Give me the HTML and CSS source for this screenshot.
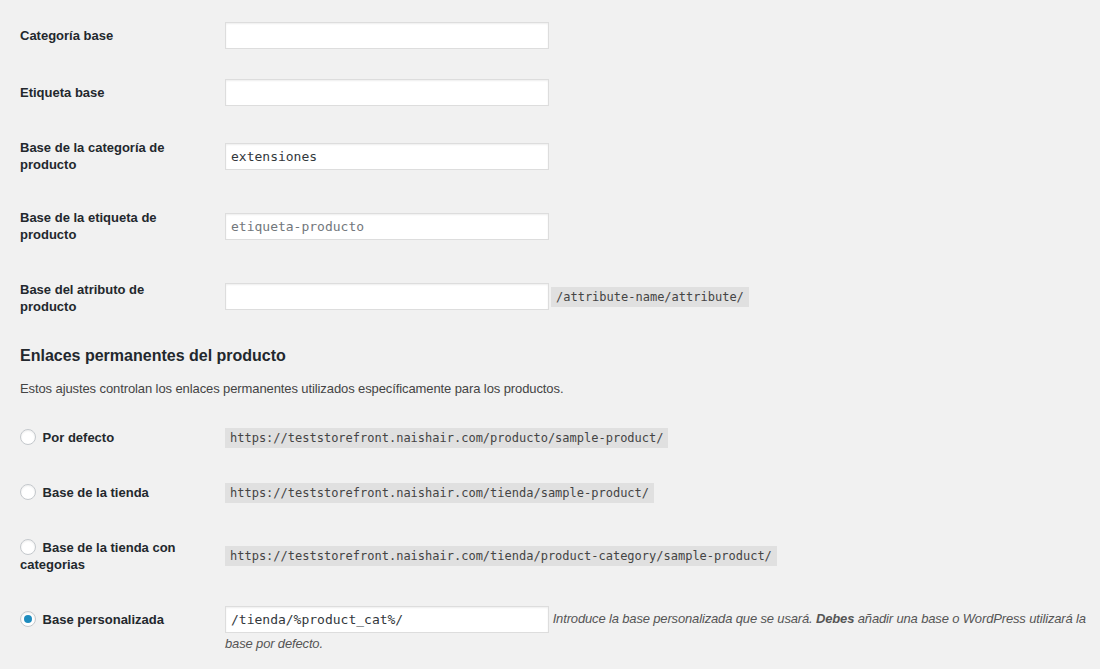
FILE: index.html
```html
<!DOCTYPE html>
<html lang="es">
  <head>
    <meta charset="UTF-8" />
    <meta name="viewport" content="width=device-width, initial-scale=1.0" />
    <title>Enlaces permanentes</title>
    <link rel="stylesheet" href="styles.css">
  </head>
  <body>
    <div class="wrap">
      <!-- Bases opcionales -->
      <div class="form-table">
        <div class="form-row">
          <label class="row-label" for="category_base">Categoría base</label>
          <div class="row-field">
            <input id="category_base" class="regular-text code" type="text" value="">
          </div>
        </div>
        <div class="form-row">
          <label class="row-label" for="tag_base">Etiqueta base</label>
          <div class="row-field">
            <input id="tag_base" class="regular-text code" type="text" value="">
          </div>
        </div>
        <div class="form-row">
          <label class="row-label" for="product_category_slug">Base de la categoría de producto</label>
          <div class="row-field">
            <input id="product_category_slug" class="regular-text code" type="text" value="extensiones">
          </div>
        </div>
        <div class="form-row">
          <label class="row-label" for="product_tag_slug">Base de la etiqueta de producto</label>
          <div class="row-field">
            <input id="product_tag_slug" class="regular-text code" type="text" value="" placeholder="etiqueta-producto">
          </div>
        </div>
        <div class="form-row attr-row">
          <label class="row-label" for="product_attribute_slug">Base del atributo de producto</label>
          <div class="row-field inline-field">
            <input id="product_attribute_slug" class="regular-text code" type="text" value="">
            <code>/attribute-name/attribute/</code>
          </div>
        </div>
      </div>

      <h2 class="section-title">Enlaces permanentes del producto</h2>
      <p class="section-desc">Estos ajustes controlan los enlaces permanentes utilizados específicamente para los productos.</p>

      <!-- Estructura de enlaces de producto -->
      <div class="form-table permalink-table">
        <div class="form-row">
          <label class="row-label"><input name="product_permalink" type="radio"> Por defecto</label>
          <div class="row-field"><code>https://teststorefront.naishair.com/producto/sample-product/</code></div>
        </div>
        <div class="form-row">
          <label class="row-label"><input name="product_permalink" type="radio"> Base de la tienda</label>
          <div class="row-field"><code>https://teststorefront.naishair.com/tienda/sample-product/</code></div>
        </div>
        <div class="form-row">
          <label class="row-label"><input name="product_permalink" type="radio"> Base de la tienda con categorias</label>
          <div class="row-field"><code>https://teststorefront.naishair.com/tienda/product-category/sample-product/</code></div>
        </div>
        <div class="form-row custom-row">
          <label class="row-label"><input name="product_permalink" type="radio" checked> Base personalizada</label>
          <div class="row-field">
            <input class="regular-text code" type="text" value="/tienda/%product_cat%/">
            <span class="description">Introduce la base personalizada que se usará. <strong>Debes</strong> añadir una base o WordPress utilizará la base por defecto.</span>
          </div>
        </div>
      </div>
    </div>
  </body>
</html>
```

FILE: styles.css
```css
body {
  margin: 0;
  background-color: #f1f1f1;
  color: #444;
  font-family: "Liberation Sans", Arial, sans-serif;
  font-size: 13px;
  line-height: 1.4;
}
.wrap {
  padding: 7px 0 0 20px;
}

/* Tabla de ajustes */
.form-row {
  display: grid;
  grid-template-columns: 205px 1fr;
  align-items: center;
}
.row-label {
  padding: 18px 28px 18px 0;
  color: #23282d;
  font-weight: 600;
  line-height: 17px;
}
.row-field {
  padding: 15px 0;
}
.attr-row .row-label {
  padding-top: 20px;
  padding-bottom: 17px;
}
.inline-field {
  display: flex;
  align-items: center;
  gap: 2px;
}

input.regular-text {
  box-sizing: border-box;
  width: 324px;
  height: 27px;
  margin: 0;
  padding: 3px 5px;
  border: 1px solid #ddd;
  box-shadow: inset 0 1px 2px rgba(0, 0, 0, 0.07);
  background-color: #fff;
  color: #32373c;
  outline: none;
}
input.code {
  font-family: "DejaVu Sans Mono", "Liberation Mono", monospace;
  font-size: 13px;
}
input.code::placeholder {
  color: #72777c;
}

code {
  display: inline-block;
  padding: 3px 5px 2px;
  background-color: rgba(0, 0, 0, 0.07);
  color: #444;
  font-family: "DejaVu Sans Mono", "Liberation Mono", monospace;
  font-size: 12px;
  line-height: 15px;
}

.section-title {
  margin: 13px 0 14px;
  color: #23282d;
  font-size: 16px;
  font-weight: 600;
  line-height: 21px;
}
.section-desc {
  margin: 0 0 12px;
  line-height: 18px;
  letter-spacing: -0.1px;
}

/* Filas con radio */
.permalink-table .row-label {
  padding: 19px 10px 19px 0;
}
.permalink-table .row-field {
  padding: 0;
}
.custom-row {
  align-items: start;
}
.custom-row .row-field {
  padding: 14px 0 0 0;
  line-height: 22px;
}
.custom-row input.regular-text {
  vertical-align: middle;
}

input[type="radio"] {
  appearance: none;
  box-sizing: border-box;
  display: inline-block;
  width: 16px;
  height: 16px;
  margin: 0 3px 0 0;
  border: 1px solid #c4c8cc;
  border-radius: 50%;
  background-color: #fff;
  box-shadow: inset 0 1px 2px rgba(0, 0, 0, 0.08);
  vertical-align: -3px;
  position: relative;
}
input[type="radio"]:checked::before {
  content: "";
  position: absolute;
  top: 3px;
  left: 3px;
  width: 8px;
  height: 8px;
  border-radius: 50%;
  background-color: #1e8cbe;
}

.description {
  color: #555;
  font-style: italic;
  letter-spacing: -0.15px;
}
.description strong {
  font-weight: 600;
}
```
